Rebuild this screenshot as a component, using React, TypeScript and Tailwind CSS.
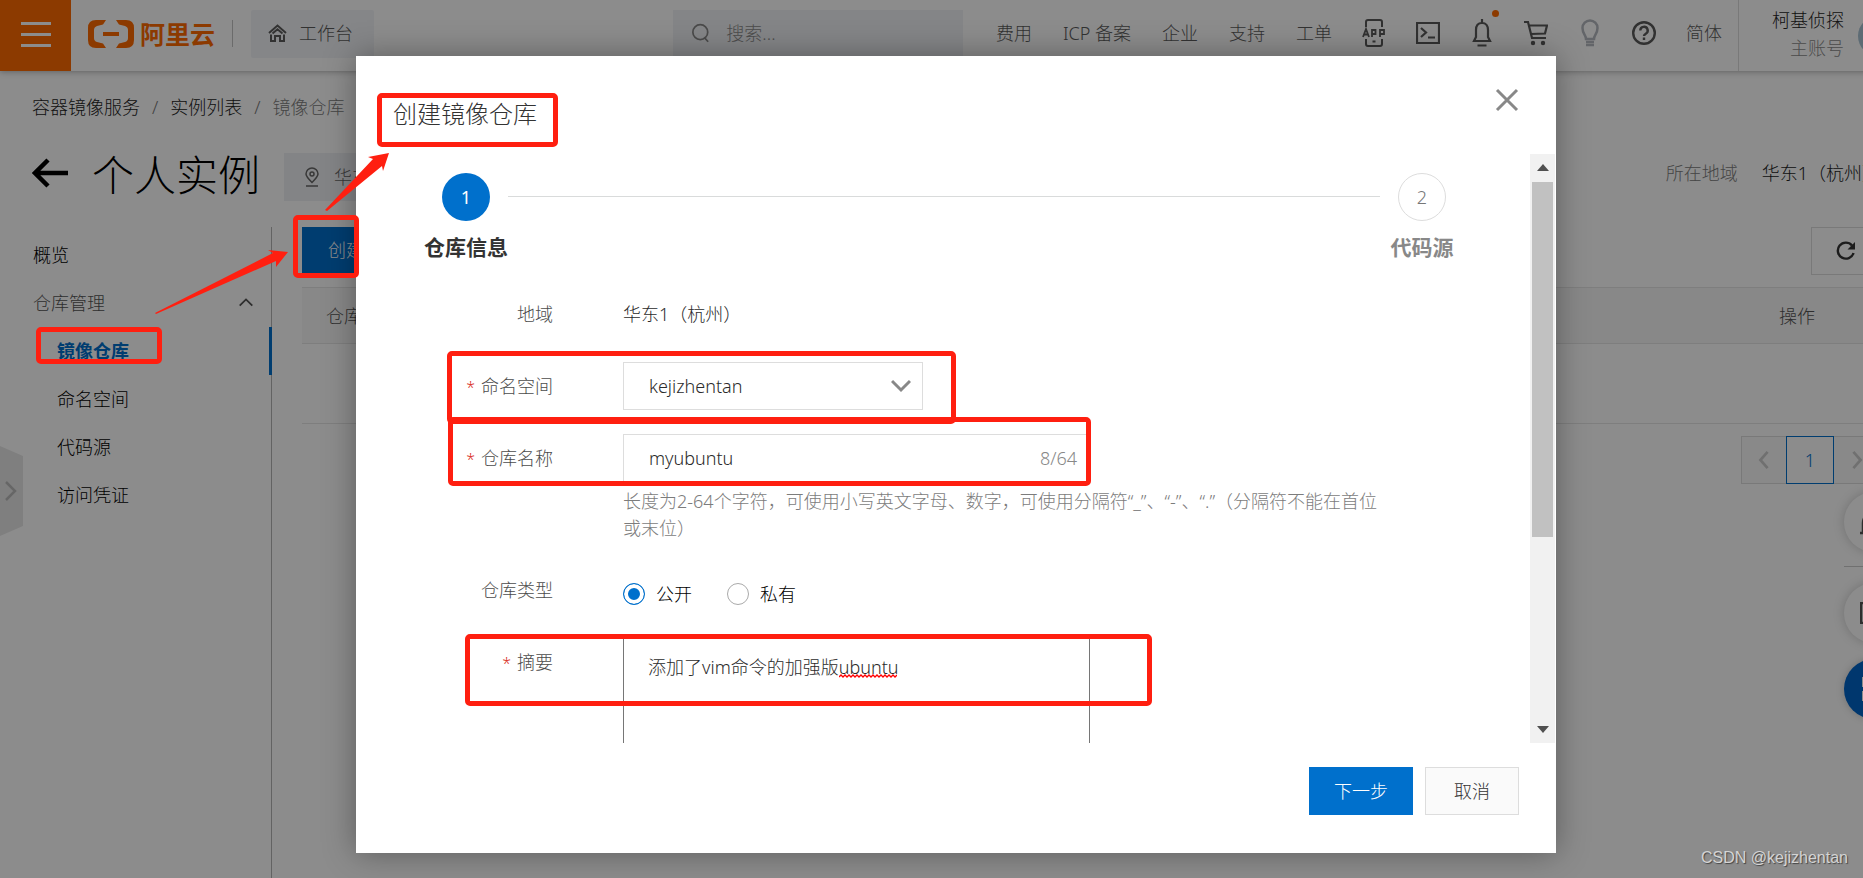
import { useState } from 'react';
import type { ReactNode } from 'react';
import { clsx } from 'clsx';

const NAV_LINKS = ['费用', 'ICP 备案', '企业', '支持', '工单'];
const SIDE_ITEMS = ['镜像仓库', '命名空间', '代码源', '访问凭证'];

// red highlight frames drawn over the page
const MARKS = [
  'left-[36px] top-[327px] w-[126px] h-[37px]',
  'left-[293px] top-[215px] w-[66px] h-[63px]',
  'left-[377px] top-[93px] w-[181px] h-[54px]',
  'left-[447px] top-[351px] w-[509px] h-[73px]',
  'left-[448px] top-[417px] w-[643px] h-[69px]',
  'left-[465px] top-[634px] w-[687px] h-[72px]',
];

interface ChevronProps {
  d: string;
  className?: string;
  width?: number;
}

const Chevron = ({ d, className, width = 2 }: ChevronProps) => (
  <svg viewBox="0 0 20 20" fill="none" stroke="currentColor" strokeWidth={width} className={className}>
    <path d={d} />
  </svg>
);

const Logo = () => (
  <a href="#home" className="flex items-center gap-1.5 text-[#ff6a00]">
    <svg width="46" height="28" viewBox="0 0 46 28" fill="currentColor">
      <path d="M18 0H8Q0 0 0 8v12q0 8 8 8h10l-3-4.500-6-1.500q-3-1-3-4V10q0-3 3-4l6-1.500z" />
      <path d="M28 0h10q8 0 8 8v12q0 8-8 8H28l3-4.500 6-1.500q3-1 3-4V10q0-3-3-4l-6-1.500z" />
      <path d="M15 12h16v4H15z" />
    </svg>
    <span className="text-[25px] leading-7 font-bold">阿里云</span>
  </a>
);

const HeaderIcons = () => (
  <div className="flex items-center gap-[30px] text-[#595959]">
    <button aria-label="App">
      <svg width="24" height="28" viewBox="0 0 24 28" fill="none" stroke="currentColor" strokeWidth="2">
        <path d="M4 8V3q0-2 2-2h12q2 0 2 2v5M4 20v5q0 2 2 2h12q2 0 2-2v-5" />
        <path d="M1 18l3-8 3 8M2 15.500h4M10 18v-7h3.500v4H10M18 18v-7h4v4h-4" strokeWidth="1.800" />
        <path d="M10.500 22.500h3" />
      </svg>
    </button>
    <button aria-label="Cloud Shell">
      <svg width="24" height="22" viewBox="0 0 24 22" fill="none" stroke="currentColor" strokeWidth="2.200">
        <path d="M1 1h22v20H1zM5 6l5 4.500L5 15M12 15.500h7" />
      </svg>
    </button>
    <button aria-label="消息" className="relative px-[2px]">
      <svg width="20" height="28" viewBox="0 0 20 28" fill="none" stroke="currentColor" strokeWidth="2.200">
        <path d="M10 4c-4 0-6 3-6 7v7l-2 4h16l-2-4v-7c0-4-2-7-6-7zM10 0v4M5.500 26.500h9" />
      </svg>
      <span className="absolute -top-[9px] right-[-5px] size-[7px] rounded-full bg-[#ff6a00]" />
    </button>
    <button aria-label="购物车">
      <svg width="24" height="26" viewBox="0 0 24 26" fill="none" stroke="currentColor" strokeWidth="2.200">
        <path d="M0 2h4l4 16h14M5 5.500h18l-2 8L7 14" />
        <circle cx="9" cy="23" r="2.200" fill="currentColor" stroke="none" />
        <circle cx="19" cy="23" r="2.200" fill="currentColor" stroke="none" />
      </svg>
    </button>
    <button aria-label="提示" className="px-[3px] text-[#b5b9bf]">
      <svg width="18" height="28" viewBox="0 0 18 28" fill="none" stroke="currentColor" strokeWidth="2.500">
        <path d="M5 20c0-4-3.500-5-3.500-11a7.500 7.500 0 0 1 15 0c0 6-3.500 7-3.500 11z" />
        <path d="M5 23h8M5 26h8" strokeWidth="2.500" />
      </svg>
    </button>
    <button aria-label="帮助">
      <svg width="24" height="28" viewBox="0 0 24 28" fill="none" stroke="currentColor" strokeWidth="2.400">
        <circle cx="12" cy="14" r="10.800" />
        <path d="M8.300 11.500a3.700 3.700 0 1 1 5.500 3.200Q12 15.700 12 17M12 18.500v2.500" />
      </svg>
    </button>
  </div>
);

const Header = () => (
  <header className="relative flex h-[71px] shrink-0 items-center bg-white text-[#5c5c5c] shadow-[0_1px_6px_rgba(0,0,0,0.3)]">
    <button aria-label="菜单" className="flex size-[71px] flex-col items-center justify-center gap-2 bg-[#ff6a00] pb-[3px]">
      <span className="h-[3px] w-[30px] bg-white" />
      <span className="h-[3px] w-[30px] bg-white" />
      <span className="h-[3px] w-[30px] bg-white" />
    </button>
    <div className="flex flex-1 items-center pb-1 pl-[17px]">
      <Logo />
      <span className="ml-[17px] h-[27px] w-px bg-[#c4c4c4]" />
      <button className="ml-[18px] flex h-12 w-[123px] items-center justify-center gap-3 rounded-[2px] bg-[#f3f5f8] pr-1 pb-0.5">
        <svg width="19" height="18" viewBox="0 0 19 18" fill="none" stroke="currentColor" strokeWidth="2">
          <path d="M1 9l8.500-7.500L18 9M3 10.500V17h4v-5h5v5h4v-6.500M4.500 9.500l5-4.300 5 4.300" />
        </svg>
        工作台
      </button>
    </div>
    <label className="mr-[33px] mb-1 flex h-12 w-[290px] items-center gap-[17px] bg-[#f1f3f6] pb-0.5 pl-[19px]">
      <svg width="20" height="22" viewBox="0 0 20 22" fill="none" stroke="#888" strokeWidth="2">
        <circle cx="9.500" cy="10" r="8.500" />
        <path d="M14 16l4.500 5" />
      </svg>
      <input type="search" aria-label="搜索" placeholder="搜索..." className="w-full outline-none placeholder:text-[#8c8c8c]" />
    </label>
    <nav className="flex items-center gap-[30px] pb-[5px] whitespace-nowrap">
      <div className="flex items-center gap-[31px]">
        {NAV_LINKS.map((link) => (
          <a key={link} href="#nav">{link}</a>
        ))}
      </div>
      <HeaderIcons />
      <a href="#lang">简体</a>
    </nav>
    <div className="ml-4 flex h-full items-center gap-3.5 border-l border-[#ddd] pr-3.5 pl-[33px] whitespace-nowrap">
      <div className="pb-1 text-right leading-7">
        <p className="text-[#222]">柯基侦探</p>
        <p className="text-[#8c8c8c]">主账号</p>
      </div>
      <span className="size-10 rounded-full bg-[#a9c4d4]" />
    </div>
  </header>
);

const Sidebar = () => (
  <aside className="w-[272px] shrink-0 border-r border-[#b5b5b5] pt-1">
    <nav>
      <a href="#overview" className="flex h-12 items-center pl-[33px] text-black">概览</a>
      <button className="flex h-12 w-full items-center justify-between pr-4 pl-[33px] text-[#555]">
        仓库管理
        <Chevron d="M3 13l7-7 7 7" className="size-[18px]" />
      </button>
      {SIDE_ITEMS.map((item, i) => (
        <a
          key={item}
          href="#item"
          className={clsx('-mr-px flex h-12 items-center pl-[57px]', i === 0 ? 'border-r-3 border-[#0070cc] font-bold text-[#0070cc]' : 'text-black')}
        >
          {item}
        </a>
      ))}
    </nav>
  </aside>
);

const RepoTable = () => (
  <section className="min-w-0 flex-1 pr-8 pl-[30px]">
    <div className="flex h-[60px] items-start justify-between">
      <button className="h-[46px] bg-[#0070cc] px-[26px] text-white">创建镜像仓库</button>
      <button aria-label="刷新" className="flex h-12 w-[69px] items-center justify-center border border-[#ddd] text-[#333]">
        <svg width="20" height="20" viewBox="0 0 20 20" fill="none" stroke="currentColor" strokeWidth="2.400">
          <path d="M17.500 12a8 8 0 1 1-1.500-7.500" />
          <path d="M19 1v7.500h-7.500z" fill="currentColor" stroke="none" />
        </svg>
      </button>
    </div>
    <table className="w-full table-fixed text-left">
      <thead>
        <tr className="h-14 border-y border-[#e5e5e5] bg-[#f8f8f8] text-[#555]">
          <th className="pl-6 font-light">仓库名称</th>
          <th className="w-[101px] font-light">操作</th>
        </tr>
      </thead>
      <tbody>
        <tr className="h-20 border-b border-[#e5e5e5]">
          <td colSpan={2} />
        </tr>
      </tbody>
    </table>
    <div className="mt-3 flex justify-end">
      <button aria-label="上一页" className="flex h-12 w-[45px] items-center justify-center border border-r-0 border-[#ddd] bg-[#fafafa] text-[#ccc]">
        <Chevron d="M14 1l-8 9 8 9" className="size-[18px]" width={3} />
      </button>
      <button className="size-12 border border-[#0070cc] text-[#0070cc]">1</button>
      <button aria-label="下一页" className="flex h-12 w-[46px] items-center justify-center border border-l-0 border-[#ddd] bg-[#fafafa] text-[#ccc]">
        <Chevron d="M6 1l8 9-8 9" className="size-[18px]" width={3} />
      </button>
    </div>
  </section>
);

const Console = () => (
  <div className="relative flex h-full w-[calc(100%+49px)] flex-col bg-white">
    <Header />
    <div className="flex h-[72px] items-center gap-3 pl-8">
      <a href="#acr" className="text-[#222]">容器镜像服务</a>
      <span className="text-[#777]">/</span>
      <a href="#list" className="text-[#222]">实例列表</a>
      <span className="text-[#777]">/</span>
      <span className="text-[#808080]">镜像仓库</span>
    </div>
    <div className="flex h-[84px] items-start justify-between pt-2 whitespace-nowrap">
      <div className="flex h-12 items-center pl-8">
        <a href="#back" aria-label="返回" className="pb-1">
          <svg width="36" height="30" viewBox="0 0 36 30" fill="none" stroke="#000" strokeWidth="4.500">
            <path d="M36 15H4M16 2L3 15l13 13" />
          </svg>
        </a>
        <h1 className="ml-6 text-[42px] leading-12 text-black">个人实例</h1>
        <span className="mt-1 ml-6 flex h-12 items-center gap-3.5 bg-[#eff1f4] px-5 text-[#666]">
          <svg width="16" height="20" viewBox="0 0 16 20" fill="none" stroke="currentColor" strokeWidth="1.500">
            <path d="M8 15.500C4 11.500 2 9.500 2 7a6 6 0 0 1 12 0c0 2.500-2 4.500-6 8.500zM2 19h12" />
            <circle cx="8" cy="7" r="2" />
          </svg>
          华东1（杭州）
        </span>
      </div>
      <div className="flex h-11 items-center gap-6 pr-8">
        <span className="text-[#808080]">所在地域</span>
        <span className="text-[#222]">华东1（杭州）</span>
      </div>
    </div>
    <div className="flex flex-1">
      <Sidebar />
      <RepoTable />
    </div>

    <button aria-label="展开" className="absolute top-[446px] left-0">
      <svg width="23" height="90" viewBox="0 0 23 90" fill="none">
        <path d="M0 0l23 10v70L0 90z" fill="#e8e8e8" />
        <path d="M6 36l9 9-9 9" stroke="#bbb" strokeWidth="2.500" />
      </svg>
    </button>
    <div className="absolute top-[492px] right-2 flex flex-col items-center">
      <button aria-label="通知" className="flex size-[60px] items-center justify-center rounded-full bg-white text-[#555] shadow-[0_0_12px_rgba(0,0,0,0.2)]">
        <svg width="28" height="28" viewBox="0 0 28 28" fill="none" stroke="currentColor" strokeWidth="2.500">
          <path d="M0 25h28M3 25V15a11 11 0 0 1 22 0v10" />
        </svg>
      </button>
      <span className="mt-3.5 mb-4 h-px w-[60px] bg-[#ccc]" />
      <button aria-label="文档" className="flex size-[60px] items-center justify-center rounded-full bg-white text-[#555] shadow-[0_0_12px_rgba(0,0,0,0.2)]">
        <svg width="28" height="22" viewBox="0 0 28 22" fill="none" stroke="currentColor" strokeWidth="2.500">
          <path d="M1 1h26v20H1z" />
        </svg>
      </button>
      <button aria-label="应用" className="mt-4 flex size-[60px] items-center justify-center rounded-full bg-[#0064c8] text-white shadow-[0_0_8px_rgba(0,0,0,0.2)]">
        <svg width="24" height="24" viewBox="0 0 24 24" fill="currentColor">
          <path d="M0 0h10v10H0zM14 0h10v10H14zM0 14h10v10H0zM14 14h10v10H14z" />
        </svg>
      </button>
    </div>
  </div>
);

interface FieldProps {
  label: string;
  htmlFor?: string;
  required?: boolean;
  children: ReactNode;
}

const Field = ({ label, htmlFor, required, children }: FieldProps) => (
  <div className="flex items-start gap-[70px]">
    <label htmlFor={htmlFor} className="w-[129px] shrink-0 text-right leading-12 text-[#4c4c4c]">
      {required && <span className="mr-1.5 text-base text-[#d93026]">*</span>}
      {label}
    </label>
    <div className="flex min-h-12 min-w-0 flex-1 flex-col justify-center">{children}</div>
  </div>
);

const Steps = () => (
  <ol className="flex justify-between">
    <li className="flex w-[84px] flex-col items-center gap-[11px]">
      <span className="flex size-12 items-center justify-center rounded-full bg-[#0070cc] font-normal text-white">1</span>
      <span className="text-[21px] leading-[30px] font-bold text-[#333]">仓库信息</span>
    </li>
    <li aria-hidden="true" className="mt-[23px] h-px flex-1 bg-[#d9dbdb]" />
    <li className="flex w-[84px] flex-col items-center gap-[11px]">
      <span className="flex size-12 items-center justify-center rounded-full border border-[#ddd] text-[#777]">2</span>
      <span className="text-[21px] leading-[30px] font-bold text-[#888]">代码源</span>
    </li>
  </ol>
);

const RADIO = 'size-[22px] appearance-none rounded-full border border-[#aaa] checked:border-[#0070cc] checked:bg-[#0070cc] checked:shadow-[inset_0_0_0_4px_#fff]';

const RepoForm = () => {
  const [name, setName] = useState('myubuntu');
  const [type, setType] = useState('public');

  return (
    <form className="mt-7 flex flex-col gap-6 text-[#2b2b2b]">
      <Field label="地域">华东1（杭州）</Field>
      <Field label="命名空间" htmlFor="namespace" required>
        <div className="relative w-[300px]">
          <select id="namespace" className="h-12 w-full appearance-none border border-[#ddd] bg-white pl-[25px] outline-none">
            <option>kejizhentan</option>
          </select>
          <Chevron d="M1 5l9 9 9-9" className="pointer-events-none absolute top-[14px] right-3 size-5 text-[#888]" width={3} />
        </div>
      </Field>
      <Field label="仓库名称" htmlFor="repo-name" required>
        <div className="flex h-12 w-[467px] items-center border border-[#ddd] pr-3 pl-[25px]">
          <input
            id="repo-name"
            value={name}
            maxLength={64}
            onChange={(e) => setName(e.target.value)}
            className="min-w-0 flex-1 outline-none"
          />
          <span className="text-[#888]">{name.length}/64</span>
        </div>
        <p className="mt-1.5 max-w-[772px] leading-[27px] text-[#7c7c7c]">
          长度为2-64个字符，可使用小写英文字母、数字，可使用分隔符“_”、“-”、“.”（分隔符不能在首位或末位）
        </p>
      </Field>
      <Field label="仓库类型">
        <div className="flex items-center gap-[35px] pt-2 text-black">
          <label className="flex items-center gap-[11px]">
            <input type="radio" name="type" checked={type === 'public'} onChange={() => setType('public')} className={RADIO} />
            公开
          </label>
          <label className="flex items-center gap-[11px]">
            <input type="radio" name="type" checked={type === 'private'} onChange={() => setType('private')} className={RADIO} />
            私有
          </label>
        </div>
      </Field>
      <Field label="摘要" htmlFor="summary" required>
        <div className="relative">
          <textarea
            id="summary"
            spellCheck={false}
            defaultValue="添加了vim命令的加强版ubuntu"
            className="block h-[150px] w-[467px] resize-none border-x border-b border-[#767676] px-6 py-4 leading-[27px] outline-none"
          />
          {/* spelling squiggle */}
          <svg width="58" height="4" viewBox="0 0 58 4" fill="none" stroke="#f00" className="absolute top-9 left-[216px]">
            <path d="M0 3l2-2 2 2 2-2 2 2 2-2 2 2 2-2 2 2 2-2 2 2 2-2 2 2 2-2 2 2 2-2 2 2 2-2 2 2 2-2 2 2 2-2 2 2 2-2 2 2 2-2 2 2 2-2 2 2 2-2" strokeWidth="1.300" />
          </svg>
        </div>
      </Field>
    </form>
  );
};

const CreateDialog = () => (
  <div role="dialog" aria-label="创建镜像仓库" className="flex w-[1200px] flex-col bg-white shadow-[0_0_30px_rgba(0,0,0,0.35)]">
    <div className="flex h-[98px] items-center justify-between pt-[18px] pr-[37px] pl-[37px]">
      <h2 className="text-2xl text-[#333]">创建镜像仓库</h2>
      <button aria-label="关闭" className="pb-7 text-[#888]">
        <svg width="24" height="24" viewBox="0 0 24 24" fill="none" stroke="currentColor" strokeWidth="3">
          <path d="M2 2l20 20M22 2L2 22" />
        </svg>
      </button>
    </div>
    <div className="flex h-[589px] pr-px">
      <div className="min-w-0 flex-1 overflow-hidden pt-[19px] pr-[66px] pl-[68px]">
        <Steps />
        <RepoForm />
      </div>
      <div className="flex w-[25px] flex-col items-center bg-[#f1f1f1] text-[#505050]">
        <svg width="12" height="7" viewBox="0 0 12 7" fill="currentColor" className="mt-2.5">
          <path d="M6 0l6 7H0z" />
        </svg>
        <div className="mt-[11px] h-[355px] w-[21px] bg-[#c1c1c1]" />
        <svg width="12" height="7" viewBox="0 0 12 7" fill="currentColor" className="mt-auto mb-2.5">
          <path d="M0 0h12L6 7z" />
        </svg>
      </div>
    </div>
    <div className="flex justify-end gap-3 pt-6 pr-[37px] pb-[38px]">
      <button className="h-12 bg-[#0070cc] px-[25px] text-white">下一步</button>
      <button className="h-12 border border-[#ddd] bg-[#fafafa] px-7 text-[#333]">取消</button>
    </div>
  </div>
);

const Annotations = () => (
  <div className="pointer-events-none absolute inset-0">
    {MARKS.map((mark) => (
      <div key={mark} className={clsx('absolute rounded-[5px] border-5 border-[#ff1f10]', mark)} />
    ))}
    <svg width="400" height="320" viewBox="0 0 400 320" fill="#ff1f10" className="absolute top-0 left-0">
      <path d="M155 313L273 253l-5-3 20 2-12 15v-6L156 314z" />
      <path d="M325 210L373 159l-5-2 21-4-6 18-1-5L327 211z" />
    </svg>
    <p className="absolute right-[15px] bottom-2 font-['Liberation_Sans'] text-base leading-6 font-normal text-[#d4d4d4] [text-shadow:1px_1px_1px_#444]">
      CSDN @kejizhentan
    </p>
  </div>
);

export default function App() {
  return (
    <div className="relative h-screen overflow-hidden font-['Noto_Sans','Noto_Sans_CJK_SC',sans-serif] text-lg font-light [text-spacing-trim:space-all]">
      <Console />
      <div className="absolute inset-y-0 left-0 flex w-[calc(100%+49px)] items-start justify-center bg-black/45 pt-14">
        <CreateDialog />
      </div>
      <Annotations />
    </div>
  );
}
